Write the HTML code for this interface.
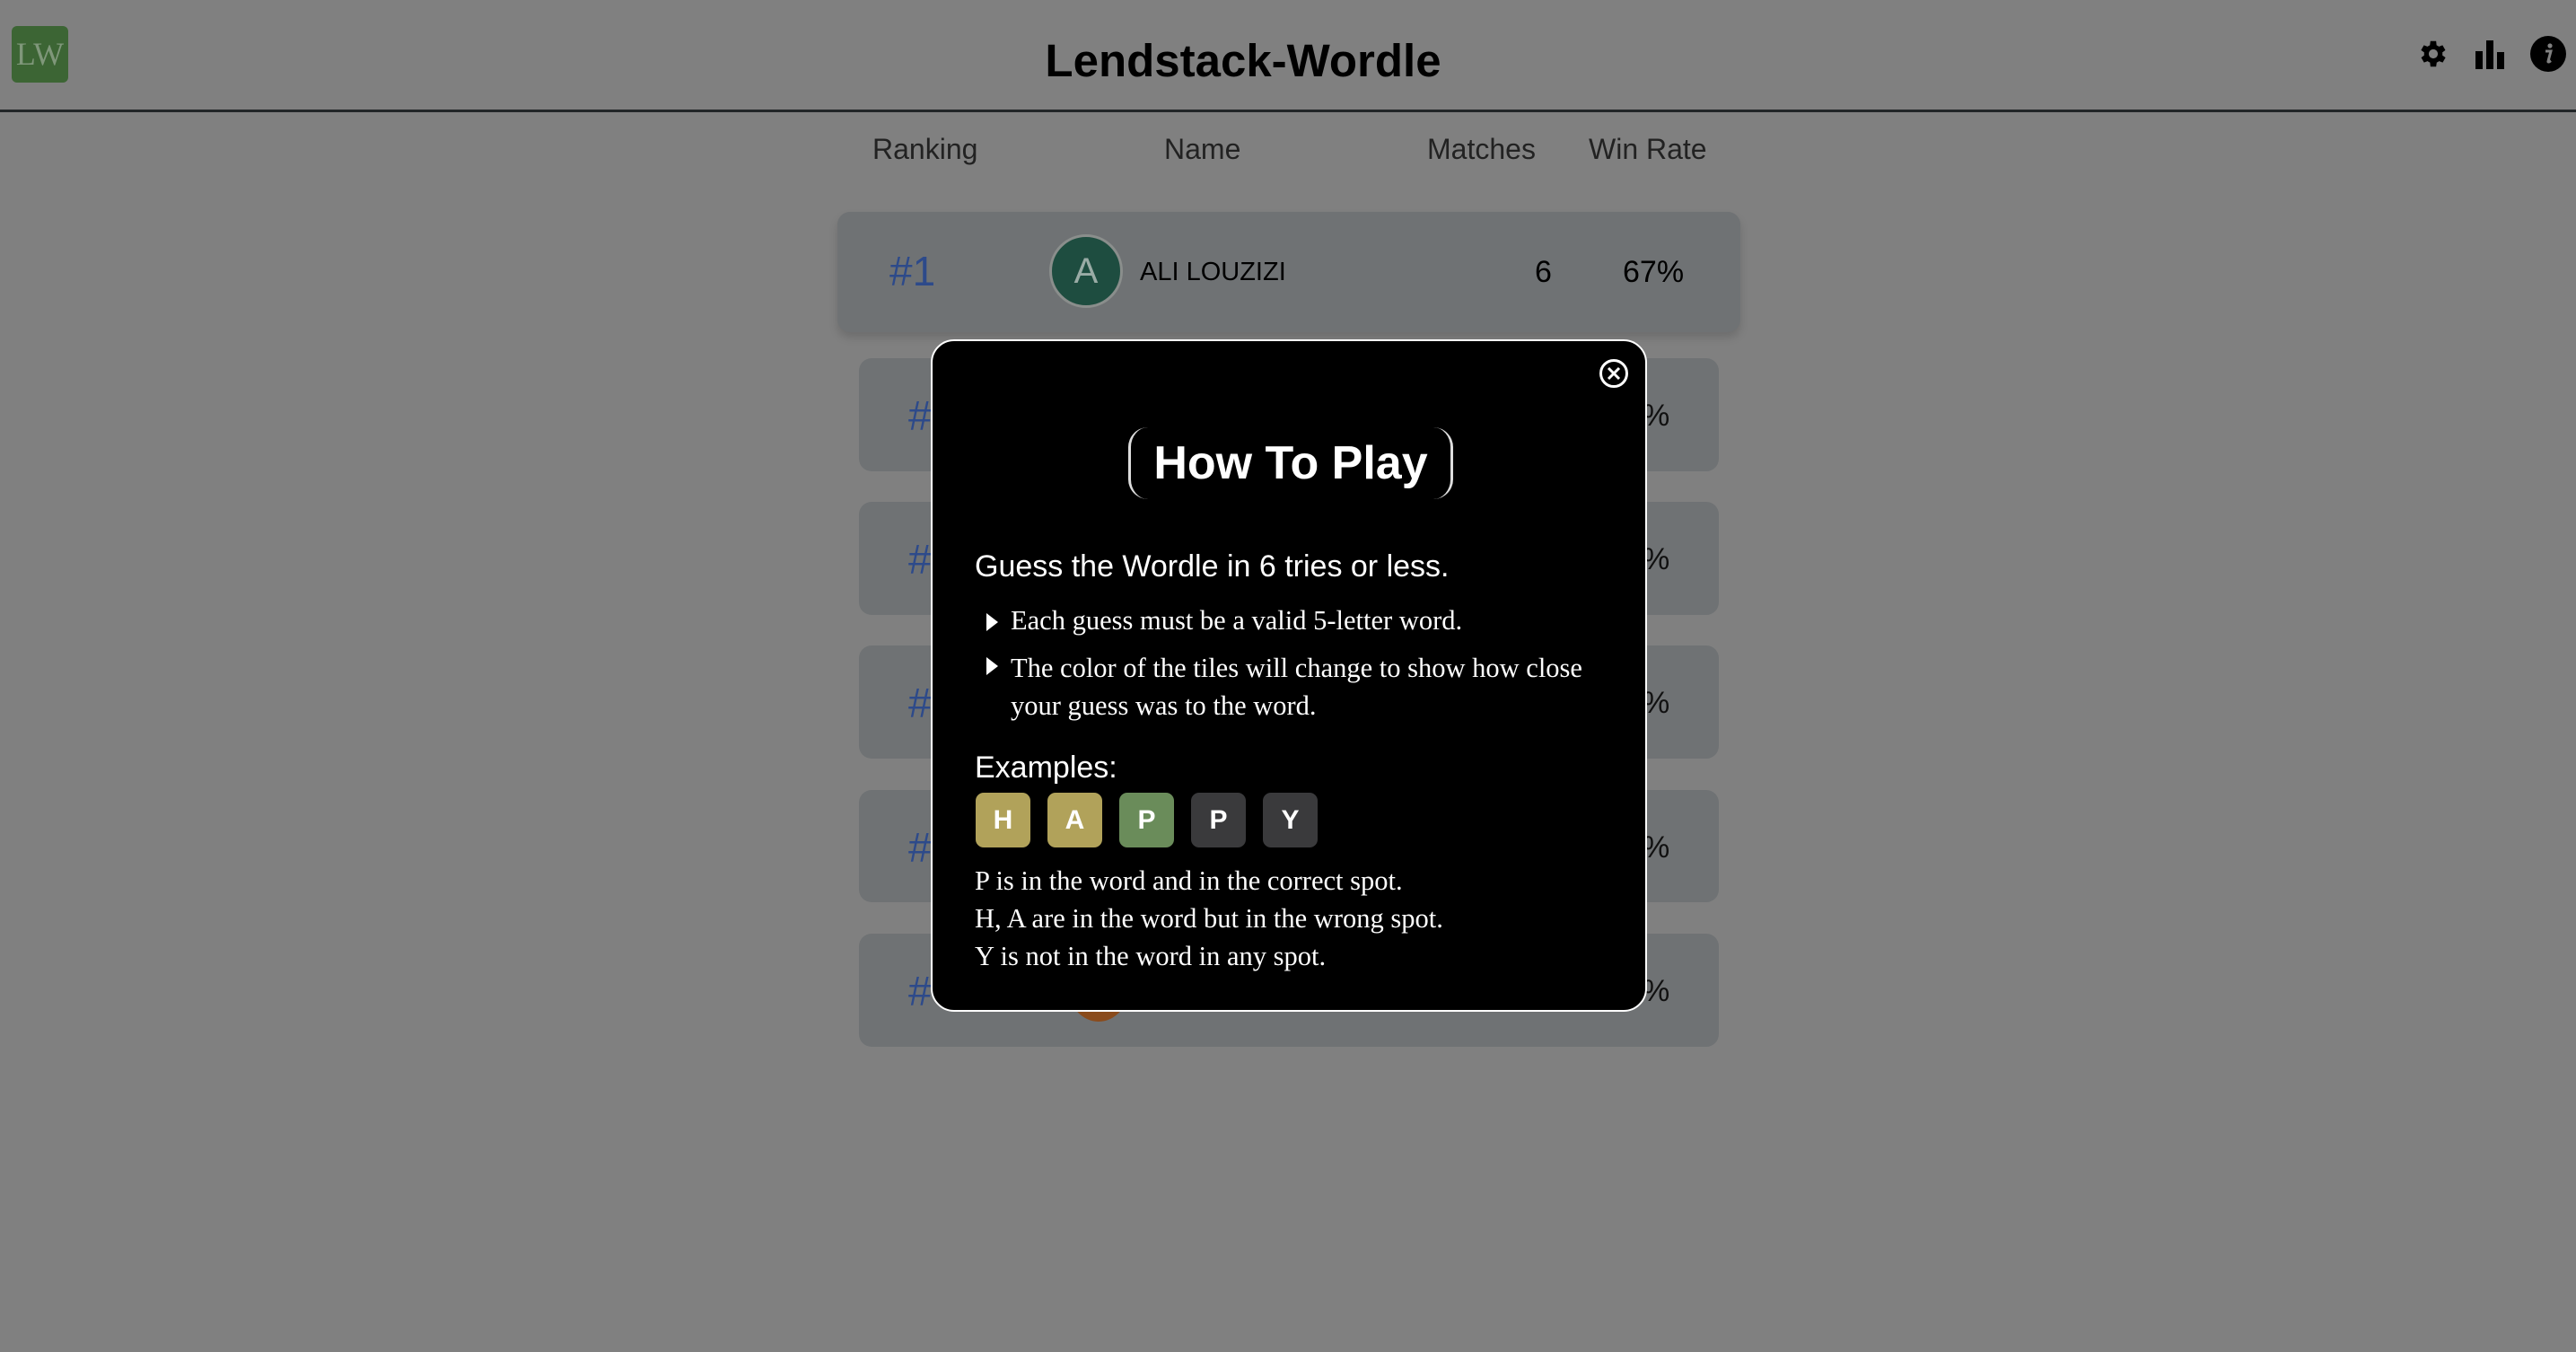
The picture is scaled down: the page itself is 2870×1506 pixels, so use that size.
<!DOCTYPE html>
<html><head><meta charset="utf-8"><style>
*{margin:0;padding:0;box-sizing:border-box}
body{width:2870px;height:1506px;background:#808080;position:relative;overflow:hidden;font-family:"Liberation Sans",sans-serif;color:#111}
.a{position:absolute}
.hdr{left:0;top:0;width:2870px;height:125px;border-bottom:3px solid #222628}
.logo{left:13px;top:29px;width:63px;height:63px;background:#3c6534;border-radius:6px;color:#7f977a;font-family:"Liberation Serif",serif;font-size:36px;text-align:center;line-height:63px}
.title{left:0;width:2770px;top:38px;text-align:center;font-size:51px;font-weight:bold;color:#000}
.col{top:148px;font-size:32px;color:#222}
.row{background:#6f7274;border-radius:14px}
.num{color:#2d4a8a;font-size:46px}
.modal{left:1037px;top:378px;width:798px;height:749px;background:#000;border:2px solid #fff;border-radius:26px;color:#fff}
.serif{font-family:"Liberation Serif",serif;font-size:30.5px;color:#fff}
.tile{top:883px;width:61px;height:61px;border-radius:9px;color:#fff;font-weight:bold;font-size:30px;text-align:center;line-height:61px}
</style></head><body>
<div class="a hdr"></div>
<div class="a logo">LW</div>
<div class="a title">Lendstack-Wordle</div>
<svg class="a" style="left:2692px;top:41px" width="38" height="38" viewBox="0 0 24 24"><path fill="#000" d="M19.4 13a7.5 7.5 0 0 0 0-2l2.1-1.6-2-3.5-2.5 1a7.4 7.4 0 0 0-1.7-1L15 3h-4l-.4 2.9a7.4 7.4 0 0 0-1.7 1l-2.5-1-2 3.5L6.6 11a7.5 7.5 0 0 0 0 2l-2.1 1.6 2 3.5 2.5-1a7.4 7.4 0 0 0 1.7 1L11 21h4l.4-2.9a7.4 7.4 0 0 0 1.7-1l2.5 1 2-3.5zM13 15.2a3.2 3.2 0 1 1 0-6.4 3.2 3.2 0 0 1 0 6.4z" transform="translate(-1 0)"/><circle cx="12" cy="12" r="1.6" fill="#808080"/></svg>
<svg class="a" style="left:2758px;top:45px" width="36" height="32" viewBox="0 0 36 32"><rect x="0" y="12" width="8" height="20" fill="#000"/><rect x="12" y="0" width="8" height="32" fill="#000"/><rect x="24" y="13" width="8" height="19" fill="#000"/></svg>
<svg class="a" style="left:2819px;top:40px" width="40" height="40" viewBox="0 0 40 40"><circle cx="20" cy="20" r="20" fill="#000"/><circle cx="22" cy="11" r="2.6" fill="#808080"/><path d="M17 17h6l-3 11c-.3 1 .5 1.3 1.5.6l1.5-1" stroke="#808080" stroke-width="3" fill="none"/></svg>

<div class="a col" style="left:972px">Ranking</div>
<div class="a col" style="left:1297px">Name</div>
<div class="a col" style="left:1590px">Matches</div>
<div class="a col" style="left:1770px">Win Rate</div>

<div class="a row" style="left:933px;top:236px;width:1006px;height:134px;box-shadow:0 6px 10px rgba(0,0,0,.15)"></div>
<div class="a num" style="left:991px;top:275px">#1</div>
<div class="a" style="left:1169px;top:261px;width:82px;height:82px;border-radius:50%;background:#1e4d40;border:3px solid #8a8e8c;color:#9aaca6;font-size:40px;text-align:center;line-height:76px">A</div>
<div class="a" style="left:1270px;top:287px;font-size:29px;color:#000">ALI LOUZIZI</div>
<div class="a" style="left:1710px;top:284px;font-size:34px;color:#000">6</div>
<div class="a" style="left:1808px;top:284px;font-size:34px;color:#000">67%</div>

<div class="a row" style="left:957px;top:399px;width:958px;height:126px"></div>
<div class="a row" style="left:957px;top:559px;width:958px;height:126px"></div>
<div class="a row" style="left:957px;top:719px;width:958px;height:126px"></div>
<div class="a row" style="left:957px;top:880px;width:958px;height:125px"></div>
<div class="a row" style="left:957px;top:1040px;width:958px;height:126px"></div>
<div class="a num" style="left:1012px;top:436px">#</div>
<div class="a num" style="left:1012px;top:596px">#</div>
<div class="a num" style="left:1012px;top:756px">#</div>
<div class="a num" style="left:1012px;top:917px">#</div>
<div class="a num" style="left:1012px;top:1077px">#</div>
<div class="a" style="left:1190px;top:1060px;width:68px;height:78px;border-radius:50%;background:#8a4b1c"></div>
<div class="a" style="left:1830px;top:444px;font-size:34px">%</div>
<div class="a" style="left:1830px;top:604px;font-size:34px">%</div>
<div class="a" style="left:1830px;top:764px;font-size:34px">%</div>
<div class="a" style="left:1830px;top:925px;font-size:34px">%</div>
<div class="a" style="left:1830px;top:1085px;font-size:34px">%</div>

<div class="a modal">
<svg class="a" style="left:742px;top:19px" width="34" height="34" viewBox="0 0 34 34"><circle cx="17" cy="17" r="14.5" stroke="#fff" stroke-width="3" fill="none"/><path d="M11 11l12 12M23 11L11 23" stroke="#fff" stroke-width="3"/></svg>
<div class="a" style="left:218px;top:96px;width:362px;height:80px;border-left:3px solid #ddd;border-right:3px solid #ddd;border-radius:22px;text-align:center;font-weight:bold;font-size:52px;line-height:80px">How To Play</div>
<div class="a" style="left:47px;top:232px;font-size:34px">Guess the Wordle in 6 tries or less.</div>
<svg class="a" style="left:60px;top:303px" width="14" height="20"><path d="M0 0L13 10L0 20z" fill="#fff"/></svg>
<div class="a serif" style="left:87px;top:294px;white-space:nowrap">Each guess must be a valid 5-letter word.</div>
<svg class="a" style="left:60px;top:352px" width="14" height="20"><path d="M0 0L13 10L0 20z" fill="#fff"/></svg>
<div class="a serif" style="left:87px;top:343px;line-height:42px;white-space:nowrap">The color of the tiles will change to show how close<br>your guess was to the word.</div>
<div class="a" style="left:47px;top:456px;font-size:34px">Examples:</div>
<div class="a serif" style="left:47px;top:580px;line-height:42px;white-space:nowrap">P is in the word and in the correct spot.<br>H, A are in the word but in the wrong spot.<br>Y is not in the word in any spot.</div>
</div>
<div class="a tile" style="left:1087px;background:#b1a25a">H</div>
<div class="a tile" style="left:1167px;background:#b1a25a">A</div>
<div class="a tile" style="left:1247px;background:#6a8c5a">P</div>
<div class="a tile" style="left:1327px;background:#3a3a3c">P</div>
<div class="a tile" style="left:1407px;background:#3a3a3c">Y</div>
</body></html>
